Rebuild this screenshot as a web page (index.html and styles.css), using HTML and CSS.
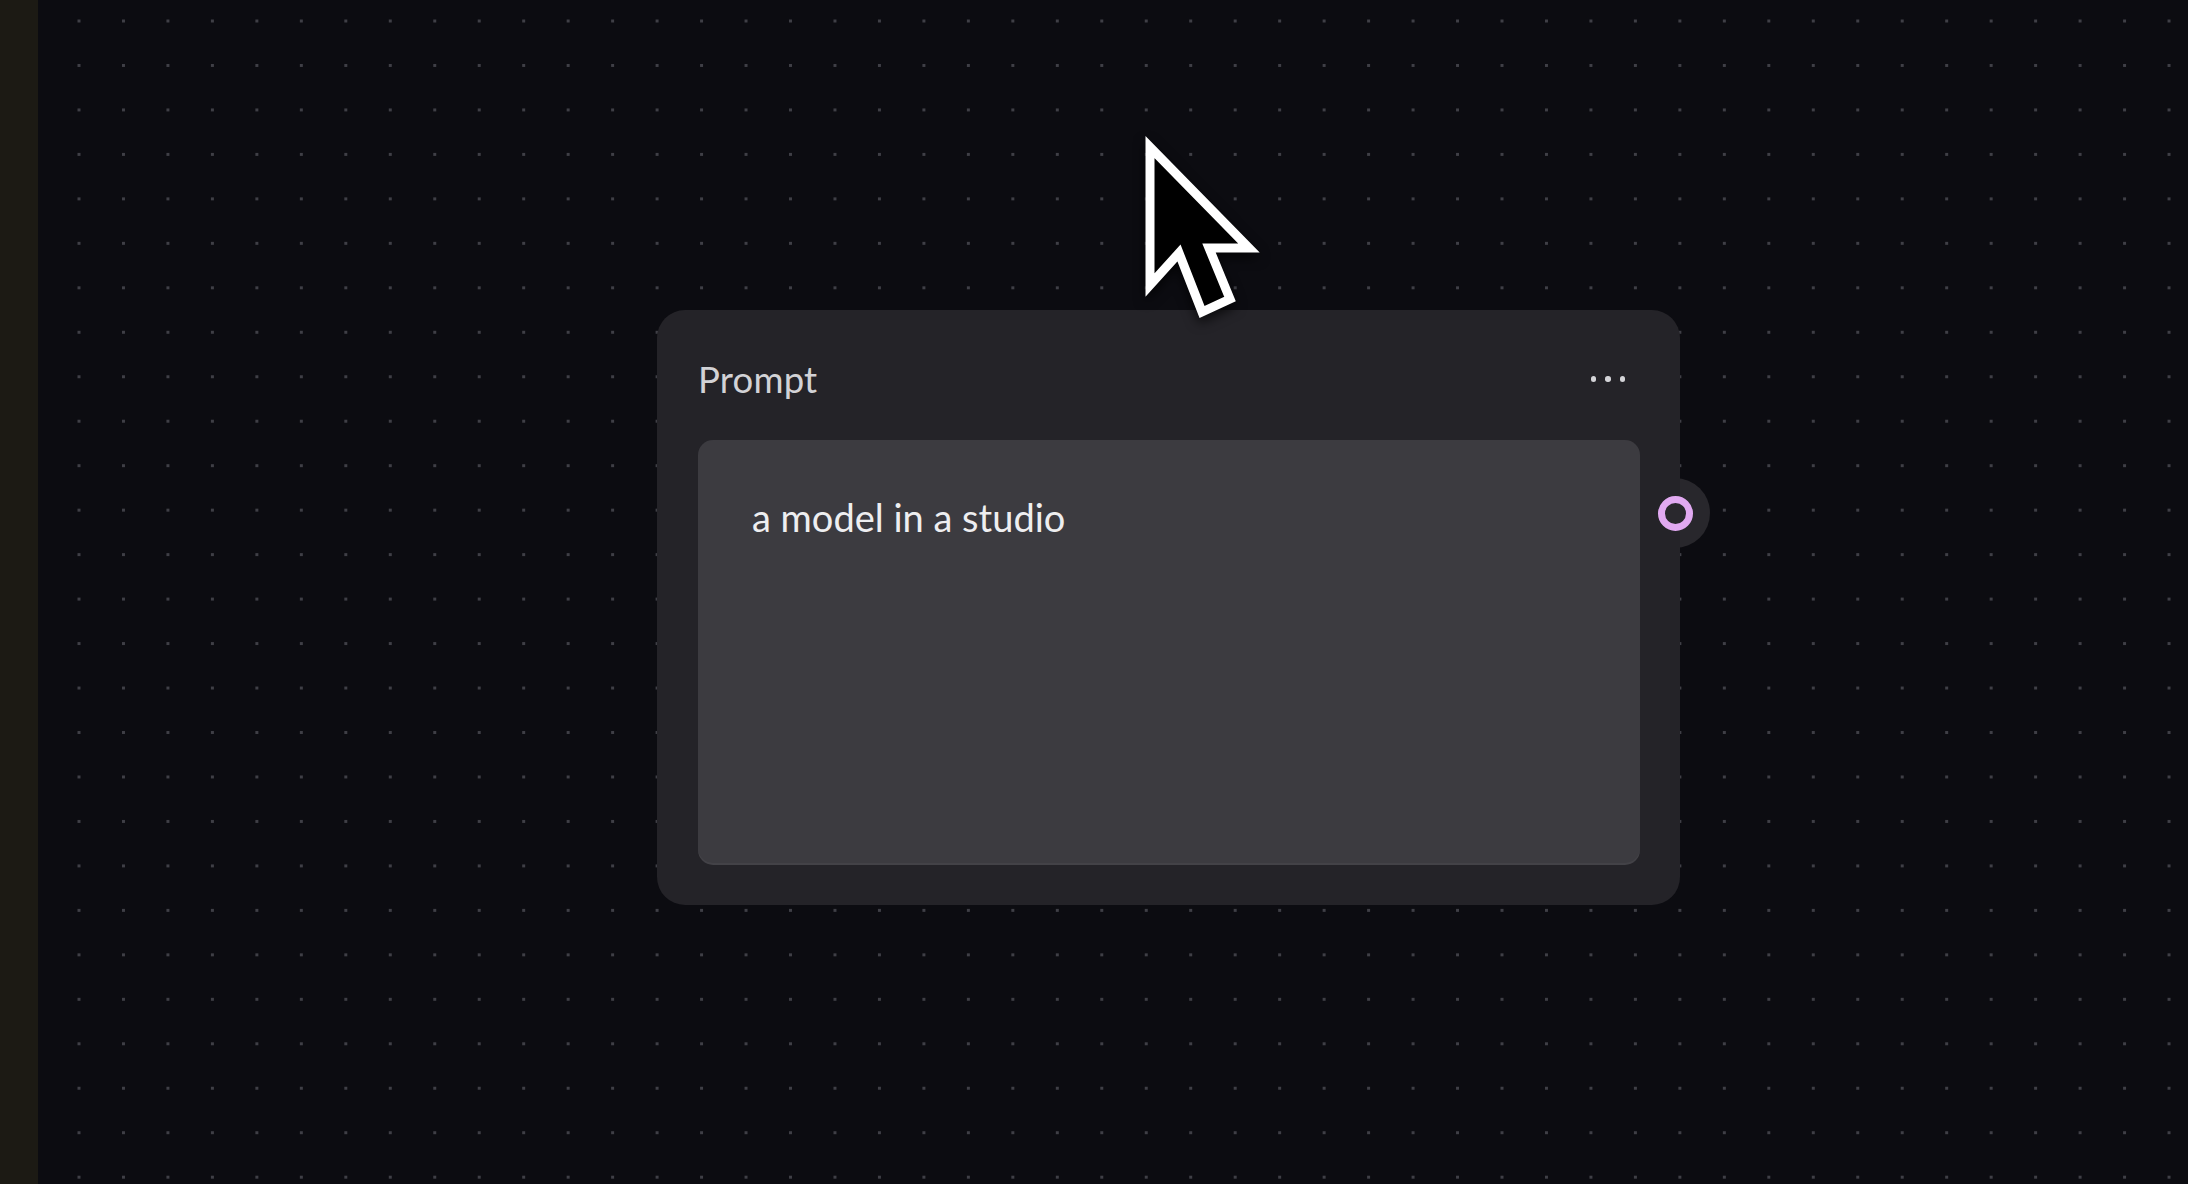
FILE: index.html
```html
<!DOCTYPE html>
<html lang="en">
<head>
<meta charset="utf-8">
<title>Prompt node</title>
<link rel="stylesheet" href="styles.css">
</head>
<body>
<div class="app">
  <aside class="sidebar"></aside>
  <main class="canvas">
    <section class="node">
      <div class="port-bump"></div>
      <header class="node-header">
        <span class="node-title">Prompt</span>
        <button class="node-menu" aria-label="More options">
          <span class="dot"></span><span class="dot"></span><span class="dot"></span>
        </button>
      </header>
      <div class="node-body">
        <div class="prompt-box">a model in a studio</div>
      </div>
      <span class="port"></span>
    </section>
    <svg class="cursor" width="130" height="200" viewBox="0 0 130 200" aria-hidden="true">
      <polygon points="5,12 5,150 34,118 57,177 85,164 64,113 104,113" fill="#000" stroke="#fff" stroke-width="9" stroke-linejoin="miter" stroke-miterlimit="10"/>
    </svg>
  </main>
</div>
</body>
</html>
```

FILE: styles.css
```css
* { box-sizing: border-box; }

html, body {
  margin: 0;
  padding: 0;
  width: 2188px;
  height: 1184px;
  overflow: hidden;
  background: #0c0c11;
  font-family: "Lato", "Open Sans", sans-serif;
}

.app {
  display: flex;
  width: 100%;
  height: 100%;
}

.sidebar {
  width: 38px;
  flex: 0 0 38px;
  background: #1c1a14;
}

.canvas {
  position: relative;
  z-index: 0;
  flex: 1;
  height: 100%;
  background-color: #0c0c11;
  background-image: radial-gradient(circle, #3f3f46 0 1.4px, transparent 1.9px);
  background-size: 44.47px 44.47px;
  background-position: 18.77px -1.24px;
}

.node {
  position: absolute;
  left: 619px;
  top: 310px;
  width: 1023px;
  height: 595px;
  background: #242328;
  border-radius: 28px;
  display: flex;
  flex-direction: column;
  padding: 0 40px 40px 41px;
}

.node-header {
  height: 130px;
  flex: 0 0 130px;
  display: flex;
  align-items: center;
  justify-content: space-between;
  padding-top: 8px;
}

.node-title {
  font-size: 36.5px;
  color: #d2d2d6;
  letter-spacing: 0.2px;
}

.node-menu {
  display: flex;
  gap: 9px;
  background: none;
  border: 0;
  padding: 0;
  margin-right: 15px;
  cursor: pointer;
}

.dot {
  width: 5.5px;
  height: 5.5px;
  border-radius: 50%;
  background: #d4d4d8;
}

.node-body {
  flex: 1;
  display: flex;
}

.prompt-box {
  flex: 1;
  background: #3c3b40;
  border-radius: 15px;
  padding: 54px 54px;
  font-size: 38px;
  color: #eeeef0;
  box-shadow: inset 0 -2px 0 rgba(255,255,255,0.04);
}

.port-bump {
  position: absolute;
  right: -30px;
  top: 168px;
  width: 70px;
  height: 70px;
  border-radius: 50%;
  background: #28272c;
  z-index: -1;
}

.port {
  position: absolute;
  right: -13px;
  top: 186px;
  width: 35px;
  height: 35px;
  border-radius: 50%;
  border: 7px solid #e1a9f1;
  background: #29282d;
}

.cursor {
  position: absolute;
  left: 1107px;
  top: 135px;
  overflow: visible;
  filter: drop-shadow(0 5px 6px rgba(0,0,0,0.7));
}
```
